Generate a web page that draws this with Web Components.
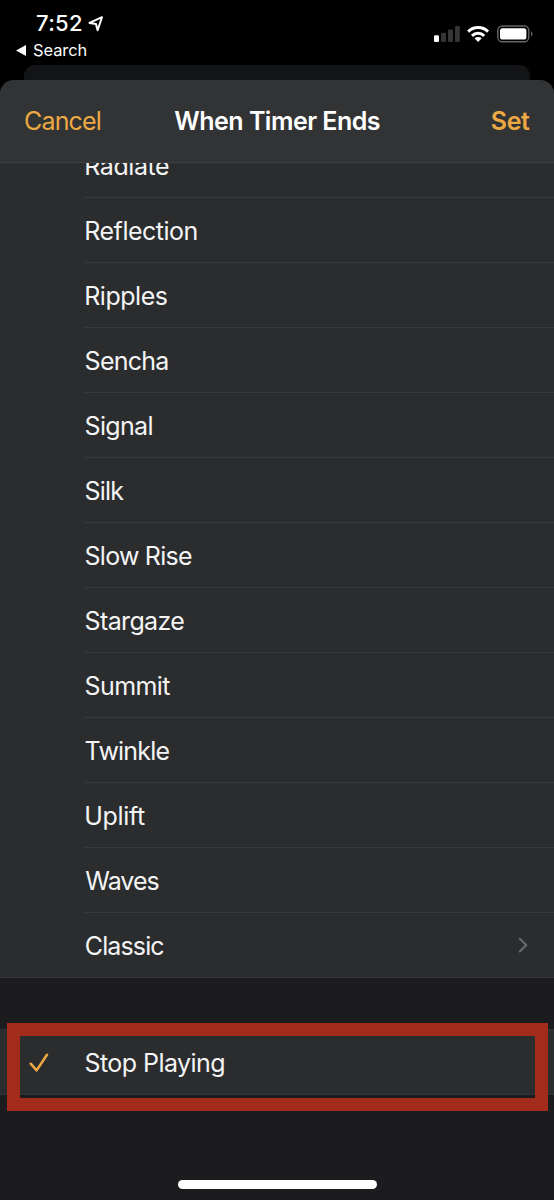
<!DOCTYPE html>
<html lang="en">
<head>
<meta charset="utf-8">
<title>When Timer Ends</title>
<style>
html,body{margin:0;background:#000}
body{width:554px;height:1200px;overflow:hidden;font-family:Inter,"Liberation Sans",sans-serif;color:#f4f4f5}
</style>
</head>
<body>
<timer-screen></timer-screen>
<script>
const define = (name, html, setup) => customElements.define(name, class extends HTMLElement {
  connectedCallback() {
    if (this.shadowRoot) return;
    const t = document.createElement('template');
    t.innerHTML = html;
    this.attachShadow({mode: 'open'}).append(t.content.cloneNode(true));
    if (setup) setup(this, this.shadowRoot);
  }
});

// One line of text whose tracking makes its ink exactly `span` px wide, starting `inset` px in.
const ctx = document.createElement('canvas').getContext('2d');
define('ui-label', `<style>
:host{display:block;white-space:pre;line-height:1.2;font-kerning:normal}
</style><slot></slot>`, el => {
  const size = +el.getAttribute('size'), weight = el.getAttribute('weight') || 400;
  const text = el.textContent;
  ctx.font = `${weight} ${size}px Inter, "Liberation Sans", sans-serif`;
  const m = ctx.measureText(text);
  const ink = m.actualBoundingBoxRight + m.actualBoundingBoxLeft;
  el.style.fontSize = size + 'px';
  el.style.fontWeight = weight;
  el.style.letterSpacing = ((+el.getAttribute('span') - ink) / (text.length - 1)).toFixed(3) + 'px';
  el.style.marginLeft = ((+el.getAttribute('inset') || 0) + m.actualBoundingBoxLeft).toFixed(2) + 'px';
});

define('status-bar', `<style>
:host{display:flex;justify-content:space-between;height:65px;box-sizing:border-box;color:#fff}
.left{display:flex;flex-direction:column;padding-top:10px}
.time{display:flex;align-items:center;height:27px;padding-left:36px}
.time ui-label{width:52px}
.back{display:flex;align-items:center;height:27px;padding-left:16px;gap:7px}
.icons{display:flex;align-items:flex-start;padding:24px 20px 0 0}
svg{display:block}
</style>
<div class="left">
 <div class="time"><ui-label size="22" weight="550" span="46">7:52</ui-label>
 <svg width="17" height="18" viewBox="0 0 17 18"><path d="M14 2.2 1.5 7.9 8 8.9 9.6 15.2Z" fill="none" stroke="#fff" stroke-width="2" stroke-linejoin="round"/></svg></div>
 <div class="back"><svg width="10" height="11" viewBox="0 0 10 11"><path d="M0 5.5 10 0V11Z" fill="#fff"/></svg>
 <ui-label size="16.4" weight="400" span="53.5">Search</ui-label></div>
</div>
<div class="icons"><svg width="100" height="20" viewBox="0 0 100 20">
 <rect x="0" y="11.3" width="5" height="6.6" rx="1.2" fill="#fff"/>
 <g fill="#343536"><rect x="7" y="8.7" width="5" height="9.2" rx="1.2"/><rect x="14" y="5.5" width="5" height="12.4" rx="1.2"/><rect x="21" y="2" width="4.8" height="15.9" rx="1.2"/></g>
 <g fill="none" stroke="#fff" stroke-width="3"><path d="M34.2 7.6a14.2 14.2 0 0 1 19.8 0"/><path d="M38 11.8a8.8 8.8 0 0 1 12.2 0"/></g>
 <path d="M44.1 17.9 40.5 14.3a5.3 5.3 0 0 1 7.2 0Z" fill="#fff"/>
 <rect x="63.8" y="2" width="31" height="15.8" rx="4.6" fill="none" stroke="#666" stroke-width="1.4"/>
 <rect x="66" y="4.2" width="26.4" height="11.4" rx="2.6" fill="#fff"/>
 <path d="M97 7.6c2 .7 2 4 0 4.7Z" fill="#666"/>
</svg></div>`);

define('sheet-header', `<style>
:host{display:grid;grid-template-columns:174px 1fr 63px;align-items:center;flex:none;height:82px;background:#313335;border-bottom:1px solid #3d3e40;border-radius:14px 14px 0 0}
.act{color:#eda942}
.title{color:#fff}
</style>
<ui-label class="act" size="25" inset="25" span="75.8">Cancel</ui-label>
<ui-label class="title" size="25" weight="580" inset="0.3" span="205.5">When Timer Ends</ui-label>
<ui-label class="act" size="25" weight="580" inset="0.7" span="38.4">Set</ui-label>`);

define('tone-row', `<style>
:host{display:flex;flex:none;height:65px;align-items:stretch}
.mark{width:84px;display:flex;align-items:center;box-sizing:border-box;padding-left:29px}
.body{flex:1;display:flex;align-items:center;justify-content:space-between;border-bottom:1px solid #38393c;padding-right:25px}
::slotted(ui-label){padding-top:2px}
:host([last]) .body{border-bottom-color:transparent}
svg{display:none}
:host([checked]) .mark svg,:host([more]) .body svg{display:block}
</style>
<div class="mark"><svg width="20" height="20" viewBox="0 0 20 20"><path d="M1.7 10.7 7.6 17.4 18 1.7" fill="none" stroke="#edaa44" stroke-width="2.5" stroke-linecap="round" stroke-linejoin="round"/></svg></div>
<div class="body"><slot></slot><svg width="11" height="18" viewBox="0 0 11 18"><path d="M1.8 2.7 8.3 9 1.8 15.5" fill="none" stroke="#6a6b6e" stroke-width="2" stroke-linecap="round" stroke-linejoin="round"/></svg></div>`);

define('tone-list', `<style>
:host{display:flex;flex:none;flex-direction:column;justify-content:flex-end;background:#2b2c2e;box-shadow:inset 0 -1px #333437;overflow:hidden;box-sizing:border-box}
</style><slot></slot>`);

define('highlight-frame', `<style>
:host{display:block;box-sizing:border-box;border:13px solid #a32b1b}
</style>`);

const tones = [['Radiate',2,82.7],['Reflection',2,110.3],['Ripples',1.9,80.6],['Sencha',1.3,82.7],['Signal',1.3,66.8],['Silk',1.3,38.6],['Slow Rise',1.3,106.3],['Stargaze',1.3,98.7],['Summit',1.3,84.7],['Twinkle',1.3,83.9],['Uplift',2,58.7],['Waves',1,73.2],['Classic',1.5,78.5]];
const rows = tones.map(([t, x, w]) => `<tone-row ${t === 'Classic' ? 'more last' : ''}><ui-label size="25" inset="${x + 0.3}" span="${w}">${t}</ui-label></tone-row>`).join('');

define('timer-screen', `<style>
:host{display:flex;flex-direction:column;width:554px;height:1200px;position:relative;background:#000;overflow:hidden}
.peek{height:15px;margin:0 24px;background:#131416;border-radius:11px 11px 0 0}
.sheet{flex:1;display:flex;flex-direction:column;background:#1c1c1e;border-radius:14px 14px 0 0}
.tones{height:815px}
.stop{height:66px;margin-top:51px;border-top:1px solid #303134}
highlight-frame{position:absolute;left:7px;top:1023px;width:541px;height:88px}
.home{width:199px;height:9px;border-radius:5px;background:#fff;margin:auto auto 11px}
</style>
<status-bar></status-bar>
<div class="peek"></div>
<div class="sheet">
 <sheet-header></sheet-header>
 <tone-list class="tones">${rows}</tone-list>
 <tone-list class="stop"><tone-row checked last><ui-label size="25" inset="1.5" span="138.8">Stop Playing</ui-label></tone-row></tone-list>
 <div class="home"></div>
</div>
<highlight-frame></highlight-frame>`);
</script>
</body>
</html>
